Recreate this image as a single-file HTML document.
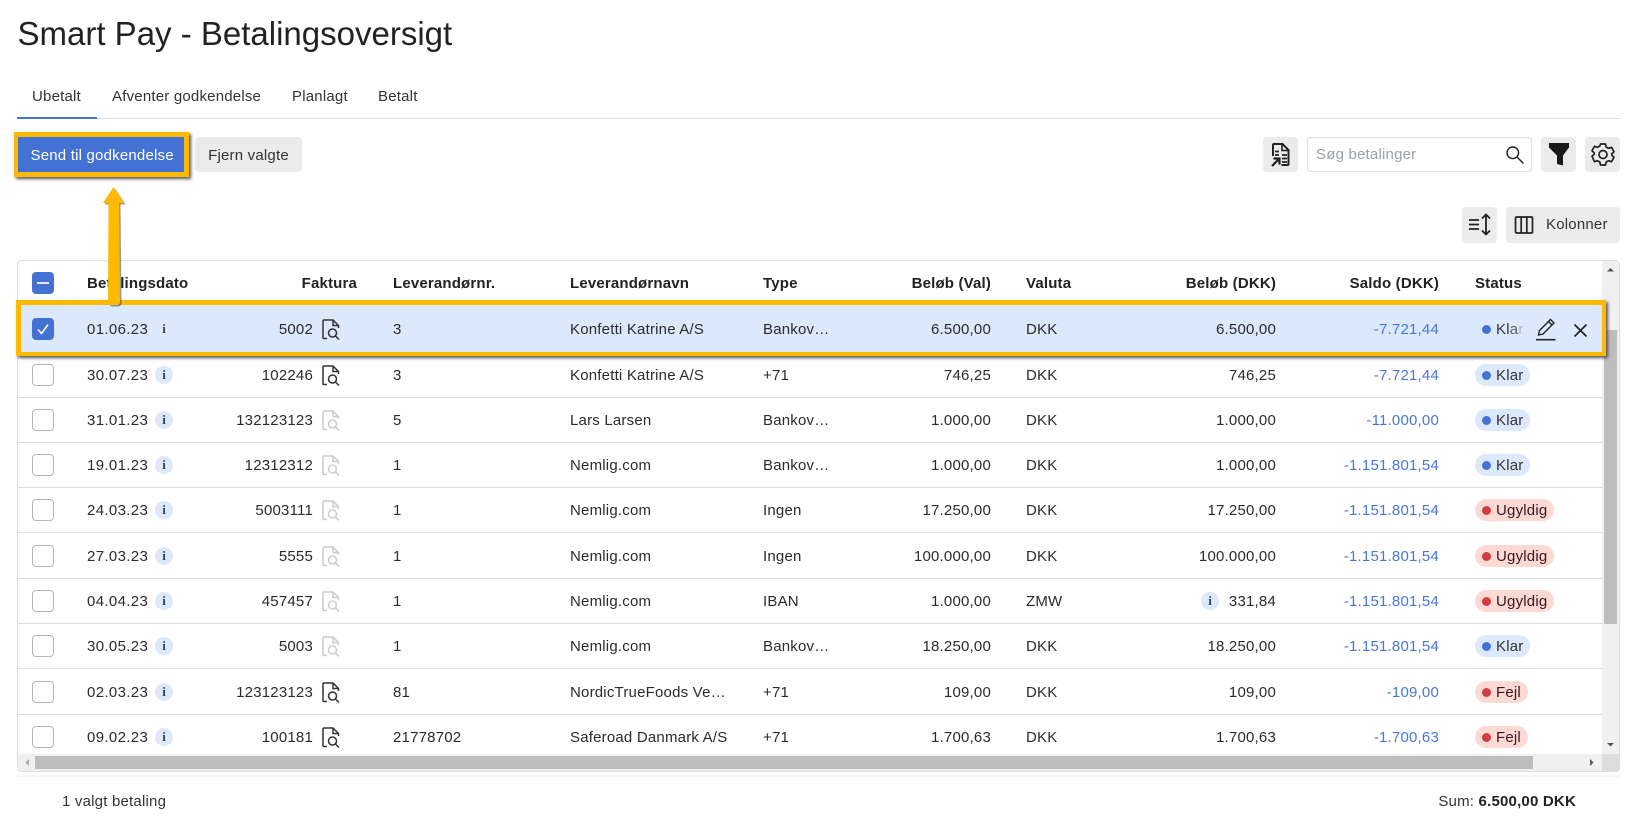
<!DOCTYPE html>
<html><head><meta charset="utf-8"><title>Smart Pay</title>
<style>
*{box-sizing:border-box}
html,body{margin:0;padding:0;width:1634px;height:830px;overflow:hidden;background:#fff}
body{font-family:"Liberation Sans",Arial,sans-serif;font-size:15px;letter-spacing:.2px;color:#2b2b2b;position:relative}
.a{position:absolute;white-space:nowrap}
h1{position:absolute;left:17.500px;top:14px;margin:0;font-weight:400;font-size:33px;line-height:40px;color:#222;white-space:nowrap;letter-spacing:0}
.tab{position:absolute;top:87px;line-height:20px;color:#333}
.btn{position:absolute;background:#ebebeb;border-radius:4px}
.wrap{position:absolute;left:17px;top:260px;width:1603px;height:512px;border:1px solid #ddd;border-radius:4px;overflow:hidden;background:#fff}
.row{position:absolute;left:0;width:1585px;height:45px;border-bottom:1px solid #ddd}
.c{position:absolute;top:0;line-height:46px;white-space:nowrap}
.cb{position:absolute;left:14px;top:11px;width:22px;height:22px;border:1.5px solid #b5b5b5;border-radius:4px;background:#fff}
.i{position:absolute;left:137px;top:13px;width:18px;height:18px;border-radius:50%;background:#dce8fc;font:bold 13px/18px "Liberation Serif",serif;text-align:center;color:#3c4452;letter-spacing:0}
.d{left:69px;letter-spacing:.35px}.f{left:150px;width:145px;text-align:right}.l{left:375px}.n{left:552px}.t{left:745px}.v{left:833px;width:140px;text-align:right}.u{left:1008px}.k{left:1118px;width:140px;text-align:right}.s{left:1263px;width:158px;text-align:right;color:#4a76d6}
.p{position:absolute;left:1457px;top:11px;height:22px;border-radius:11px;background:#dce8fc;line-height:23px;padding:0 7px 0 21px;color:#333}
.p:before{content:"";position:absolute;left:7px;top:6.500px;width:9px;height:9px;border-radius:50%;background:#4472d4}
.p.e{background:#fdd9d4;color:#3a1620}.p.e:before{background:#d13d42}
.h{position:absolute;top:11px;line-height:24px;font-weight:700;color:#222;letter-spacing:.17px;white-space:nowrap}
.doc{position:absolute;left:304px;top:12px}
</style></head><body>
<h1>Smart Pay - Betalingsoversigt</h1>
<div class="tab" style="left:32px">Ubetalt</div>
<div class="tab" style="left:112px">Afventer godkendelse</div>
<div class="tab" style="left:292px">Planlagt</div>
<div class="tab" style="left:378px">Betalt</div>
<div class="a" style="left:17px;top:118px;width:1603px;height:1px;background:#ddd"></div>
<div class="a" style="left:17px;top:117px;width:80px;height:2px;background:#4472d4"></div>

<div class="a" style="left:14px;top:132px;width:175px;height:45px;border:5px solid #ffb900;border-width:5px 5px 5px 4px;background:#4472d4;box-shadow:2px 2px 3px #555;color:#fff;line-height:37px;padding-left:12.500px">Send til godkendelse</div>
<div class="btn" style="left:195px;top:137px;width:107px;height:35px;line-height:37px;text-align:center;color:#333">Fjern valgte</div>

<div class="btn" style="left:1263px;top:137px;width:35px;height:35px">
<svg width="35" height="35" viewBox="0 0 35 35" fill="none" stroke="#222" stroke-width="2"><path d="M10 19V8a1 1 0 0 1 1-1h8.500l6 6v14a1 1 0 0 1-1 1h-6"/><path d="M19 7v6.500h6.500" stroke-width="1.600"/><path d="M9 29l7-7M10.500 21.500h6v6" stroke-width="2.200"/><path d="M12 14.500h4M19 18h5M19 21.500h5M19 25h5M12 18h4" stroke-width="1.800"/></svg></div>
<div class="a" style="left:1307px;top:137px;width:225px;height:35px;border:1px solid #ddd;border-radius:4px;line-height:33px;padding-left:8px;color:#9aa0a8">Søg betalinger
<svg style="position:absolute;left:198px;top:8px" width="18" height="18" viewBox="0 0 18 18" fill="none" stroke="#222" stroke-width="1.400"><circle cx="6.800" cy="6.800" r="5.800"/><path d="M11 11L17.500 17.500"/></svg></div>
<div class="btn" style="left:1541px;top:137px;width:35px;height:35px">
<svg width="35" height="35" viewBox="0 0 35 35"><path d="M8 6H28V10.500L22 18.500V28.500L16 27V18.500L8 10.500Z" fill="#1a1a1a"/></svg></div>
<div class="btn" style="left:1585px;top:137px;width:35px;height:35px">
<svg width="35" height="35" viewBox="0 0 35 35" fill="none" stroke="#222" stroke-width="1.700" stroke-linejoin="round"><circle cx="18" cy="17.500" r="4"/><path d="M15.500 7h5l.7 3 2.300 1.300 3-1 2.500 4.400-2.200 2 .1 1.600 2.100 2-2.500 4.400-3-1-2.300 1.300-.7 3h-5l-.7-3-2.300-1.300-3 1L7 19.300l2.200-2-.1-1.600-2.100-2 2.500-4.400 3 1 2.300-1.300z"/></svg></div>

<div class="btn" style="left:1462px;top:207px;width:35px;height:36px">
<svg width="35" height="36" viewBox="0 0 35 36" fill="none" stroke="#222" stroke-width="1.800"><path d="M7 13h10M7 17.500h10M7 22h10"/><path d="M24 8v19M20 11.500l4-4 4 4M20 23.500l4 4 4-4"/></svg></div>
<div class="btn" style="left:1506px;top:207px;width:114px;height:36px;line-height:36px;padding-left:40px;color:#333">Kolonner
<svg style="position:absolute;left:8px;top:8px" width="20" height="20" viewBox="0 0 20 20" fill="none" stroke="#222" stroke-width="1.700"><rect x="1.500" y="2" width="17" height="16" rx="1"/><path d="M7.200 2v16M12.800 2v16"/></svg></div>

<div class="wrap">
<div class="h" style="left:69px">Betalingsdato</div>
<div class="h" style="left:268px;width:71px;text-align:right">Faktura</div>
<div class="h" style="left:375px">Leverandørnr.</div>
<div class="h" style="left:552px">Leverandørnavn</div>
<div class="h" style="left:745px">Type</div>
<div class="h" style="left:845px;width:128px;text-align:right">Beløb (Val)</div>
<div class="h" style="left:1008px">Valuta</div>
<div class="h" style="left:1112px;width:146px;text-align:right">Beløb (DKK)</div>
<div class="h" style="left:1272px;width:149px;text-align:right">Saldo (DKK)</div>
<div class="h" style="left:1457px">Status</div>
<div class="a" style="left:14px;top:11px;width:22px;height:22px;background:#4472d4;border-radius:4px"><div style="position:absolute;left:5px;top:10px;width:12px;height:2px;background:#dfe7f8"></div></div>
</div>

<div class="wrap" style="background:transparent;left:18px;top:261px;width:1584px;height:493px;border:0;border-radius:0;overflow:hidden">

<div class="row" style="top:46px;height:44px;background:#dce8fc;border:0;box-shadow:0 -3px 0 #dce8fc,0 3px 0 #dce8fc">
<div class="cb" style="background:#4472d4;border:0"><svg width="22" height="22" viewBox="0 0 22 22" fill="none" stroke="#fff" stroke-width="1.500"><path d="M6 11.500l3.500 4L16 6.500"/></svg></div>
<div class="c d">01.06.23</div><div class="i" style="background:none">i</div>
<div class="c f">5002</div>
<svg class="doc" width="18" height="21" viewBox="0 0 18 21" fill="none" stroke="#333" stroke-width="1.500"><path d="M5 19.500H2a1 1 0 0 1-1-1V2a1 1 0 0 1 1-1h9l5.500 5.500V9"/><path d="M11 1v5.500h5.500"/><circle cx="10.500" cy="14" r="4"/><path d="M13.500 17l3.500 3.500"/></svg>
<div class="c l">3</div><div class="c n">Konfetti Katrine A/S</div><div class="c t">Bankov…</div><div class="c v">6.500,00</div><div class="c u">DKK</div><div class="c k">6.500,00</div><div class="c s">-7.721,44</div>
<div class="p">Kl<span style="opacity:.75">a</span><span style="opacity:.3">r</span></div>
<svg class="a" style="left:1517px;top:11px" width="22" height="24" viewBox="0 0 22 24" fill="none" stroke="#222" stroke-width="1.400"><path d="M3.500 17l1-4.500L15.500 1.500l3.500 3.500L8 16z"/><path d="M13.500 3.500l3.500 3.500"/><path d="M1 21.700h19.500" stroke-width="1.600"/></svg>
<svg class="a" style="left:1555px;top:16px" width="15" height="15" viewBox="0 0 15 15" stroke="#222" stroke-width="1.700"><path d="M1.500 1.500l12 12M13.500 1.500l-12 12"/></svg>
</div>

<div class="row" style="top:92px">
<div class="cb"></div><div class="c d">30.07.23</div><div class="i">i</div><div class="c f">102246</div>
<svg class="doc" width="18" height="21" viewBox="0 0 18 21" fill="none" stroke="#333" stroke-width="1.500"><path d="M5 19.500H2a1 1 0 0 1-1-1V2a1 1 0 0 1 1-1h9l5.500 5.500V9"/><path d="M11 1v5.500h5.500"/><circle cx="10.500" cy="14" r="4"/><path d="M13.500 17l3.500 3.500"/></svg>
<div class="c l">3</div><div class="c n">Konfetti Katrine A/S</div><div class="c t">+71</div><div class="c v">746,25</div><div class="c u">DKK</div><div class="c k">746,25</div><div class="c s">-7.721,44</div><div class="p">Klar</div>
</div>

<div class="row" style="top:137px">
<div class="cb"></div><div class="c d">31.01.23</div><div class="i">i</div><div class="c f">132123123</div>
<svg class="doc" width="18" height="21" viewBox="0 0 18 21" fill="none" stroke="#ccc" stroke-width="1.500"><path d="M5 19.500H2a1 1 0 0 1-1-1V2a1 1 0 0 1 1-1h9l5.500 5.500V9"/><path d="M11 1v5.500h5.500"/><circle cx="10.500" cy="14" r="4"/><path d="M13.500 17l3.500 3.500"/></svg>
<div class="c l">5</div><div class="c n">Lars Larsen</div><div class="c t">Bankov…</div><div class="c v">1.000,00</div><div class="c u">DKK</div><div class="c k">1.000,00</div><div class="c s">-11.000,00</div><div class="p">Klar</div>
</div>

<div class="row" style="top:182px">
<div class="cb"></div><div class="c d">19.01.23</div><div class="i">i</div><div class="c f">12312312</div>
<svg class="doc" width="18" height="21" viewBox="0 0 18 21" fill="none" stroke="#ccc" stroke-width="1.500"><path d="M5 19.500H2a1 1 0 0 1-1-1V2a1 1 0 0 1 1-1h9l5.500 5.500V9"/><path d="M11 1v5.500h5.500"/><circle cx="10.500" cy="14" r="4"/><path d="M13.500 17l3.500 3.500"/></svg>
<div class="c l">1</div><div class="c n">Nemlig.com</div><div class="c t">Bankov…</div><div class="c v">1.000,00</div><div class="c u">DKK</div><div class="c k">1.000,00</div><div class="c s">-1.151.801,54</div><div class="p">Klar</div>
</div>

<div class="row" style="top:227px">
<div class="cb"></div><div class="c d">24.03.23</div><div class="i">i</div><div class="c f">5003111</div>
<svg class="doc" width="18" height="21" viewBox="0 0 18 21" fill="none" stroke="#ccc" stroke-width="1.500"><path d="M5 19.500H2a1 1 0 0 1-1-1V2a1 1 0 0 1 1-1h9l5.500 5.500V9"/><path d="M11 1v5.500h5.500"/><circle cx="10.500" cy="14" r="4"/><path d="M13.500 17l3.500 3.500"/></svg>
<div class="c l">1</div><div class="c n">Nemlig.com</div><div class="c t">Ingen</div><div class="c v">17.250,00</div><div class="c u">DKK</div><div class="c k">17.250,00</div><div class="c s">-1.151.801,54</div><div class="p e">Ugyldig</div>
</div>

<div class="row" style="top:273px">
<div class="cb"></div><div class="c d">27.03.23</div><div class="i">i</div><div class="c f">5555</div>
<svg class="doc" width="18" height="21" viewBox="0 0 18 21" fill="none" stroke="#ccc" stroke-width="1.500"><path d="M5 19.500H2a1 1 0 0 1-1-1V2a1 1 0 0 1 1-1h9l5.500 5.500V9"/><path d="M11 1v5.500h5.500"/><circle cx="10.500" cy="14" r="4"/><path d="M13.500 17l3.500 3.500"/></svg>
<div class="c l">1</div><div class="c n">Nemlig.com</div><div class="c t">Ingen</div><div class="c v">100.000,00</div><div class="c u">DKK</div><div class="c k">100.000,00</div><div class="c s">-1.151.801,54</div><div class="p e">Ugyldig</div>
</div>

<div class="row" style="top:318px">
<div class="cb"></div><div class="c d">04.04.23</div><div class="i">i</div><div class="c f">457457</div>
<svg class="doc" width="18" height="21" viewBox="0 0 18 21" fill="none" stroke="#ccc" stroke-width="1.500"><path d="M5 19.500H2a1 1 0 0 1-1-1V2a1 1 0 0 1 1-1h9l5.500 5.500V9"/><path d="M11 1v5.500h5.500"/><circle cx="10.500" cy="14" r="4"/><path d="M13.500 17l3.500 3.500"/></svg>
<div class="c l">1</div><div class="c n">Nemlig.com</div><div class="c t">IBAN</div><div class="c v">1.000,00</div><div class="c u">ZMW</div>
<div class="i" style="left:1183px">i</div><div class="c k">331,84</div><div class="c s">-1.151.801,54</div><div class="p e">Ugyldig</div>
</div>

<div class="row" style="top:363px">
<div class="cb"></div><div class="c d">30.05.23</div><div class="i">i</div><div class="c f">5003</div>
<svg class="doc" width="18" height="21" viewBox="0 0 18 21" fill="none" stroke="#ccc" stroke-width="1.500"><path d="M5 19.500H2a1 1 0 0 1-1-1V2a1 1 0 0 1 1-1h9l5.500 5.500V9"/><path d="M11 1v5.500h5.500"/><circle cx="10.500" cy="14" r="4"/><path d="M13.500 17l3.500 3.500"/></svg>
<div class="c l">1</div><div class="c n">Nemlig.com</div><div class="c t">Bankov…</div><div class="c v">18.250,00</div><div class="c u">DKK</div><div class="c k">18.250,00</div><div class="c s">-1.151.801,54</div><div class="p">Klar</div>
</div>

<div class="row" style="top:409px">
<div class="cb"></div><div class="c d">02.03.23</div><div class="i">i</div><div class="c f">123123123</div>
<svg class="doc" width="18" height="21" viewBox="0 0 18 21" fill="none" stroke="#333" stroke-width="1.500"><path d="M5 19.500H2a1 1 0 0 1-1-1V2a1 1 0 0 1 1-1h9l5.500 5.500V9"/><path d="M11 1v5.500h5.500"/><circle cx="10.500" cy="14" r="4"/><path d="M13.500 17l3.500 3.500"/></svg>
<div class="c l">81</div><div class="c n">NordicTrueFoods Ve…</div><div class="c t">+71</div><div class="c v">109,00</div><div class="c u">DKK</div><div class="c k">109,00</div><div class="c s">-109,00</div><div class="p e">Fejl</div>
</div>

<div class="row" style="top:454px;border:0">
<div class="cb"></div><div class="c d">09.02.23</div><div class="i">i</div><div class="c f">100181</div>
<svg class="doc" width="18" height="21" viewBox="0 0 18 21" fill="none" stroke="#333" stroke-width="1.500"><path d="M5 19.500H2a1 1 0 0 1-1-1V2a1 1 0 0 1 1-1h9l5.500 5.500V9"/><path d="M11 1v5.500h5.500"/><circle cx="10.500" cy="14" r="4"/><path d="M13.500 17l3.500 3.500"/></svg>
<div class="c l">21778702</div><div class="c n">Saferoad Danmark A/S</div><div class="c t">+71</div><div class="c v">1.700,63</div><div class="c u">DKK</div><div class="c k">1.700,63</div><div class="c s">-1.700,63</div><div class="p e">Fejl</div>
</div>
</div>

<div class="a" style="left:1602px;top:261px;width:17px;height:494px;background:#f0f0f0"></div>
<div class="a" style="left:1604px;top:330px;width:13px;height:294px;background:#bdbdbd"></div>
<svg class="a" style="left:1602px;top:261px" width="17" height="494"><path d="M5 10.500L8.500 7 12 10.500z" fill="#555"/><path d="M5 482l3.500 3.500L12 482z" fill="#555"/></svg>
<div class="a" style="left:18px;top:754px;width:1584px;height:17px;background:#f0f0f0"></div>
<div class="a" style="left:35px;top:756px;width:1498px;height:13px;background:#bdbdbd"></div>
<div class="a" style="left:1602px;top:754px;width:17px;height:17px;background:#dcdcdc"></div>
<svg class="a" style="left:18px;top:754px" width="1584" height="17"><path d="M11 5L7.500 8.500 11 12z" fill="#aaa"/><path d="M1572 5l3.500 3.500L1572 12z" fill="#555"/></svg>
<div class="a" style="left:17px;top:775px;width:1603px;height:2px;background:#f5f5f5"></div>

<div class="a" style="left:62px;top:792px;line-height:20px;color:#333">1 valgt betaling</div>
<div class="a" style="right:58px;top:792px;line-height:20px;color:#333">Sum: <b style="color:#222;letter-spacing:.2px">6.500,00 DKK</b></div>

<div class="a" style="left:16px;top:300px;width:1590px;height:56px;border:5px solid #ffb900;border-width:5px 4px 4px 5px;box-shadow:2px 2px 3px #555"></div>

<svg class="a" style="left:95px;top:180px" width="40" height="132" viewBox="0 0 40 132">
<path d="M18.500 7L8 23H13.500L13 122a3 3 0 0 0 3 3h6a3 3 0 0 0 3-3L24 23H29Z" fill="#444" opacity=".55" transform="translate(1.500,1.500)"/>
<path d="M18.500 7L8 23H13.500L13 122a3 3 0 0 0 3 3h6a3 3 0 0 0 3-3L24 23H29Z" fill="#ffb900"/>
</svg>
</body></html>
